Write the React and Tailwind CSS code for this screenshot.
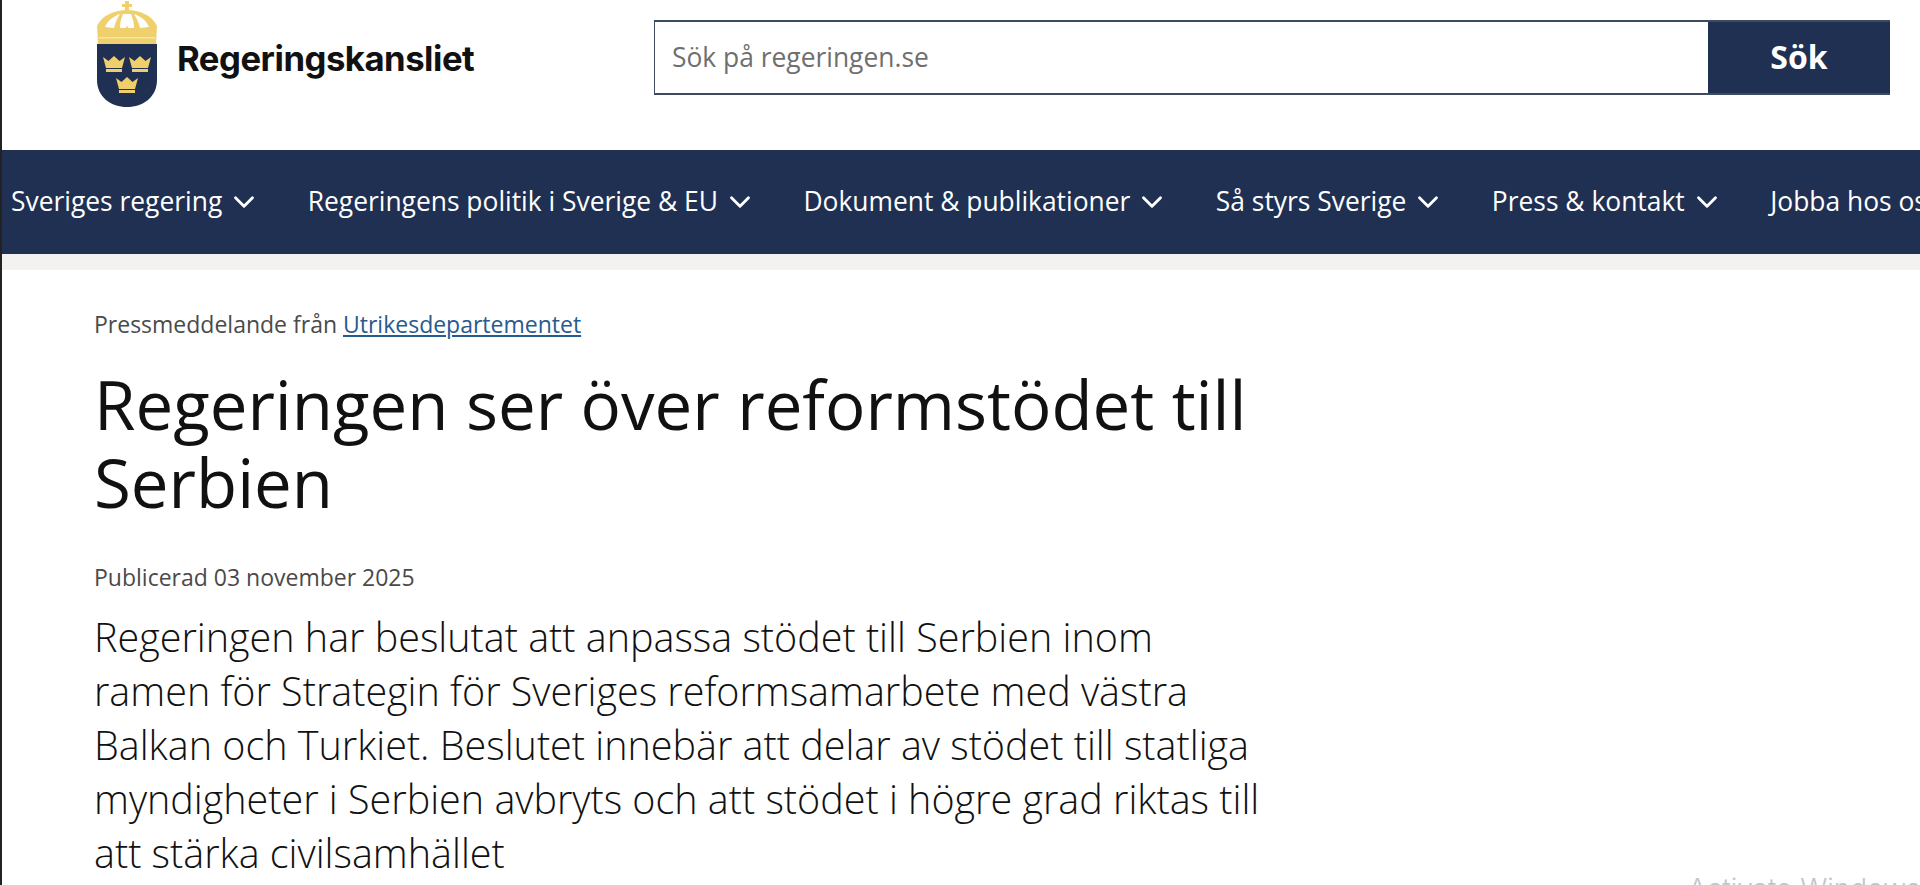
import { ChevronDown } from 'lucide-react';

const navItems = [
  { label: 'Sveriges regering', menu: true },
  { label: 'Regeringens politik i Sverige & EU', menu: true },
  { label: 'Dokument & publikationer', menu: true },
  { label: 'Så styrs Sverige', menu: true },
  { label: 'Press & kontakt', menu: true },
  { label: 'Jobba hos oss', menu: false },
];

function SmallCrown({ x, y }) {
  return (
    <g transform={`translate(${x} ${y})`} fill="#efcf6a">
      <path d="M0 1 L3 12 H19 L22 1 L16.5 5 L11 0 L5.5 5 Z" />
      <rect x="3" y="13" width="16" height="3" />
    </g>
  );
}

function Logo() {
  return (
    <svg width="62" height="107" viewBox="0 0 62 107" className="shrink-0">
      {/* krona */}
      <rect x="29" y="1" width="4" height="11" fill="#f0d06c" />
      <rect x="26" y="4" width="10" height="3" fill="#f0d06c" />
      <path d="M1 26 C6 15 19 10 31 10 C43 10 56 15 61 26 L60 44 H2 Z" fill="#f0d06c" />
      <path d="M9 27 C12 20 18 16 24 14 C21 19 19 23 18 28 Z" fill="#fff" />
      <path d="M53 27 C50 20 44 16 38 14 C41 19 43 23 44 28 Z" fill="#fff" />
      <path d="M27 14 H35 C37 19 38 23 38 28 H24 C24 23 25 19 27 14 Z" fill="#fff" />
      {/* kronans punkter */}
      <path d="M4 35 L9 28 L14 33 L20 28 L26 33 L31 26 L36 33 L42 28 L48 33 L53 28 L58 35 V44 H4 Z" fill="#f0d06c" />
      <rect x="3" y="37" width="56" height="1.5" fill="#f8e7ac" />
      {/* sköld */}
      <path d="M1 44 H61 V80 C61 97 47 107 31 107 C15 107 1 97 1 80 Z" fill="#1f3053" />
      <SmallCrown x={7} y={56} />
      <SmallCrown x={33} y={56} />
      <SmallCrown x={20} y={77} />
    </svg>
  );
}

export default function App() {
  return (
    <div className="relative h-[885px] w-full overflow-hidden bg-white border-l-2 border-[#222] font-['Open_Sans',sans-serif]">
      <header className="flex h-[150px] items-start">
        <div className="flex w-[652px] shrink-0 items-center pl-[94px]">
          <Logo />
          <span className="ml-[19px] mt-[10px] font-['Inter',sans-serif] text-[34.7px] font-bold tracking-[-0.5px] text-[#111]">Regeringskansliet</span>
        </div>
        <form className="mt-5 flex h-[75px] w-[1236px] border-y-2 border-l border-[#3e4a5e]">
          <div className="flex flex-1 items-center pl-[17px] pt-px text-[26.4px] text-[#6f6f6f]">Sök på regeringen.se</div>
          <button type="button" className="w-[182px] bg-[#1f3053] pb-0.5 text-[32px] font-bold text-white">Sök</button>
        </form>
      </header>

      <nav className="flex h-[104px] items-center gap-[46.5px] whitespace-nowrap bg-[#1f3053] pl-[9px] text-[26.4px] text-white">
        {navItems.map((item) => (
          <a key={item.label} className="flex shrink-0 items-center gap-[5px]">
            {item.label}
            {item.menu && <ChevronDown size={34} strokeWidth={2} />}
          </a>
        ))}
      </nav>
      <div className="h-4 bg-[#f3f2f1]" />

      <main className="w-[1265px] pl-[92px] pt-[38px]">
        <p className="text-[23px] leading-[32px] text-[#4a4a4a]">
          Pressmeddelande från <a className="text-[#275a8f] underline">Utrikesdepartementet</a>
        </p>
        <h1 className="mt-[25px] text-[67.2px] leading-[78px] text-[#111]">Regeringen ser över reformstödet till Serbien</h1>
        <p className="mt-[40px] text-[23px] leading-[32px] text-[#4a4a4a]">Publicerad 03 november 2025</p>
        <p className="mt-[17px] text-[39.5px] font-light leading-[54px] text-[#111]">
          Regeringen har beslutat att anpassa stödet till Serbien inom ramen för Strategin för Sveriges reformsamarbete med västra Balkan och Turkiet. Beslutet innebär att delar av stödet till statliga myndigheter i Serbien avbryts och att stödet i högre grad riktas till att stärka civilsamhället
        </p>
      </main>

      <div className="absolute left-[1686px] top-[868px] whitespace-nowrap font-['Inter',sans-serif] text-[28px] font-light text-[#c4c4c4]">Activate Windows</div>
    </div>
  );
}
